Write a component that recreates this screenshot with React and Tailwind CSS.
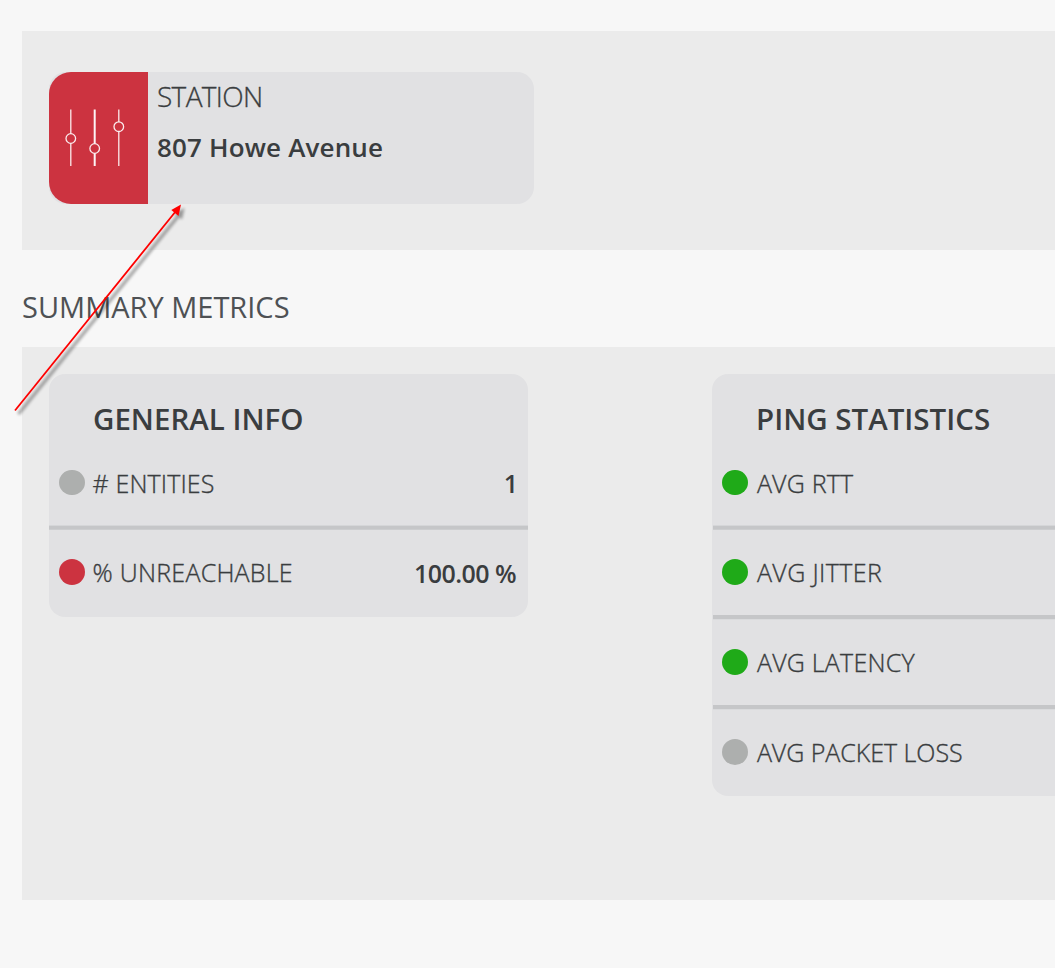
const DOT_COLORS = {
  gray: "bg-[#adafae]",
  red: "bg-[#cc3340]",
  green: "bg-[#1faa18]",
};

function SlidersIcon() {
  return (
    <svg width="99" height="132" viewBox="0 0 99 132" fill="none" stroke="#fbecee">
      <path d="M21.8 37.5V61.8M21.8 71.2V94M69.8 37.5V50M69.8 59.4V94" strokeWidth="1.3" />
      <path d="M45.7 37.5V71.8M45.7 81.2V94" strokeWidth="2" stroke="#fdf4f5" />
      <circle cx="21.8" cy="66.5" r="4.8" strokeWidth="1.3" />
      <circle cx="45.7" cy="76.5" r="4.8" strokeWidth="1.3" />
      <circle cx="69.8" cy="54.7" r="4.8" strokeWidth="1.3" />
    </svg>
  );
}

function Divider({ first, className = "" }) {
  const tone = first
    ? "h-[5px] border-y border-t-[#d5d6d8] border-b-[#cccdcf] bg-[#c5c6c8]"
    : "h-[5px] border-b border-b-[#dadbdd] bg-[#c5c6c8]";
  return <div className={`${tone} ${className}`} />;
}

function MetricRow({ dot, label, labelClass, value, valueClass = "" }) {
  return (
    <div className="flex items-center pb-px pl-[9.8px]">
      <span className={`size-[25.8px] shrink-0 rounded-full ${DOT_COLORS[dot]}`} />
      <span
        className={`text-[25px] leading-[40px] font-light whitespace-nowrap [-webkit-text-stroke:0.35px] ${labelClass}`}
      >
        {label}
      </span>
      {value && (
        <span className={`ml-auto text-[25px] leading-[40px] font-semibold whitespace-nowrap ${valueClass}`}>
          {value}
        </span>
      )}
    </div>
  );
}

function Heading({ children }) {
  return (
    <h2 className="pt-[25px] pl-11 text-[29.5px] leading-[40px] font-semibold whitespace-nowrap">
      {children}
    </h2>
  );
}

function Arrow() {
  return (
    <svg className="pointer-events-none absolute top-0 left-0" width="220" height="430" viewBox="0 0 220 430">
      <defs>
        <filter id="soft" x="-10%" y="-10%" width="120%" height="120%">
          <feGaussianBlur stdDeviation="1.7" />
        </filter>
      </defs>
      <g transform="translate(3.5 3.5)" filter="url(#soft)" opacity="0.36">
        <path d="M15 410.5L176 211" stroke="#000" strokeWidth="3" />
        <path d="M181 204.5L178.5 216L171.3 210Z" fill="#000" />
      </g>
      <path d="M15 410.5L176 211" stroke="#fe0000" strokeWidth="1.8" />
      <path d="M181 204.5L178.5 216L171.3 210Z" fill="#fe0000" />
    </svg>
  );
}

export default function App() {
  return (
    <div className="relative h-[968px] w-full overflow-hidden bg-[#f7f7f7] pt-[31px] pl-[22px] font-['Open_Sans','Noto_Sans',sans-serif] text-[#3a3d3f]">
      <section className="h-[219px] bg-[#ebebeb] pt-[41px] pl-[27px]">
        <div className="flex h-[132px] w-[485px] overflow-hidden rounded-[17px] bg-[#e1e1e3]">
          <div className="w-[99px] shrink-0 rounded-l-[22px] bg-[#cc3340]">
            <SlidersIcon />
          </div>
          <div className="flex flex-col pt-[4px] pl-[9px] whitespace-nowrap">
            <span className="text-[28px] leading-[40px] font-light tracking-[-0.65px] [-webkit-text-stroke:0.3px]">
              STATION
            </span>
            <span className="mt-[11px] text-[26px] leading-[40px] font-semibold tracking-[0.16px]">
              807 Howe Avenue
            </span>
          </div>
        </div>
      </section>

      <h1 className="h-[97px] pt-[37px] text-[29px] leading-[40px] whitespace-nowrap text-[#4e5154]">
        SUMMARY METRICS
      </h1>

      <section className="flex h-[553px] items-start bg-[#ebebeb] pt-[27px] pl-[27px]">
        <div className="h-[243px] w-[479px] shrink-0 rounded-[16px] bg-[#e1e1e3]">
          <Heading>GENERAL INFO</Heading>
          <div className="mt-[2px] grid grid-rows-[84px_5px_85px]">
            <MetricRow
              dot="gray"
              label="# ENTITIES"
              labelClass="ml-2 tracking-[0.12px]"
              value="1"
              valueClass="pr-[10px]"
            />
            <Divider first />
            <MetricRow
              dot="red"
              label="% UNREACHABLE"
              labelClass="ml-2 tracking-[0.24px]"
              value="100.00 %"
              valueClass="pt-[2px] pr-[12px] tracking-[-0.55px]"
            />
          </div>
        </div>

        <div className="ml-[184px] h-[422px] w-[479px] shrink-0 rounded-[16px] bg-[#e1e1e3]">
          <Heading>PING STATISTICS</Heading>
          <div className="mt-[2px] grid grid-rows-[84px_5px_85px_5px_85px_5px_85px]">
            <MetricRow dot="green" label="AVG RTT" labelClass="ml-[9.3px] tracking-[0.2px]" />
            <Divider first className="ml-px" />
            <MetricRow dot="green" label="AVG JITTER" labelClass="ml-[9.3px] tracking-[0.4px]" />
            <Divider className="ml-px" />
            <MetricRow dot="green" label="AVG LATENCY" labelClass="ml-[9.3px] tracking-[0.22px]" />
            <Divider className="ml-px" />
            <MetricRow dot="gray" label="AVG PACKET LOSS" labelClass="ml-[9.3px] tracking-[-0.04px]" />
          </div>
        </div>
      </section>

      <Arrow />
    </div>
  );
}
